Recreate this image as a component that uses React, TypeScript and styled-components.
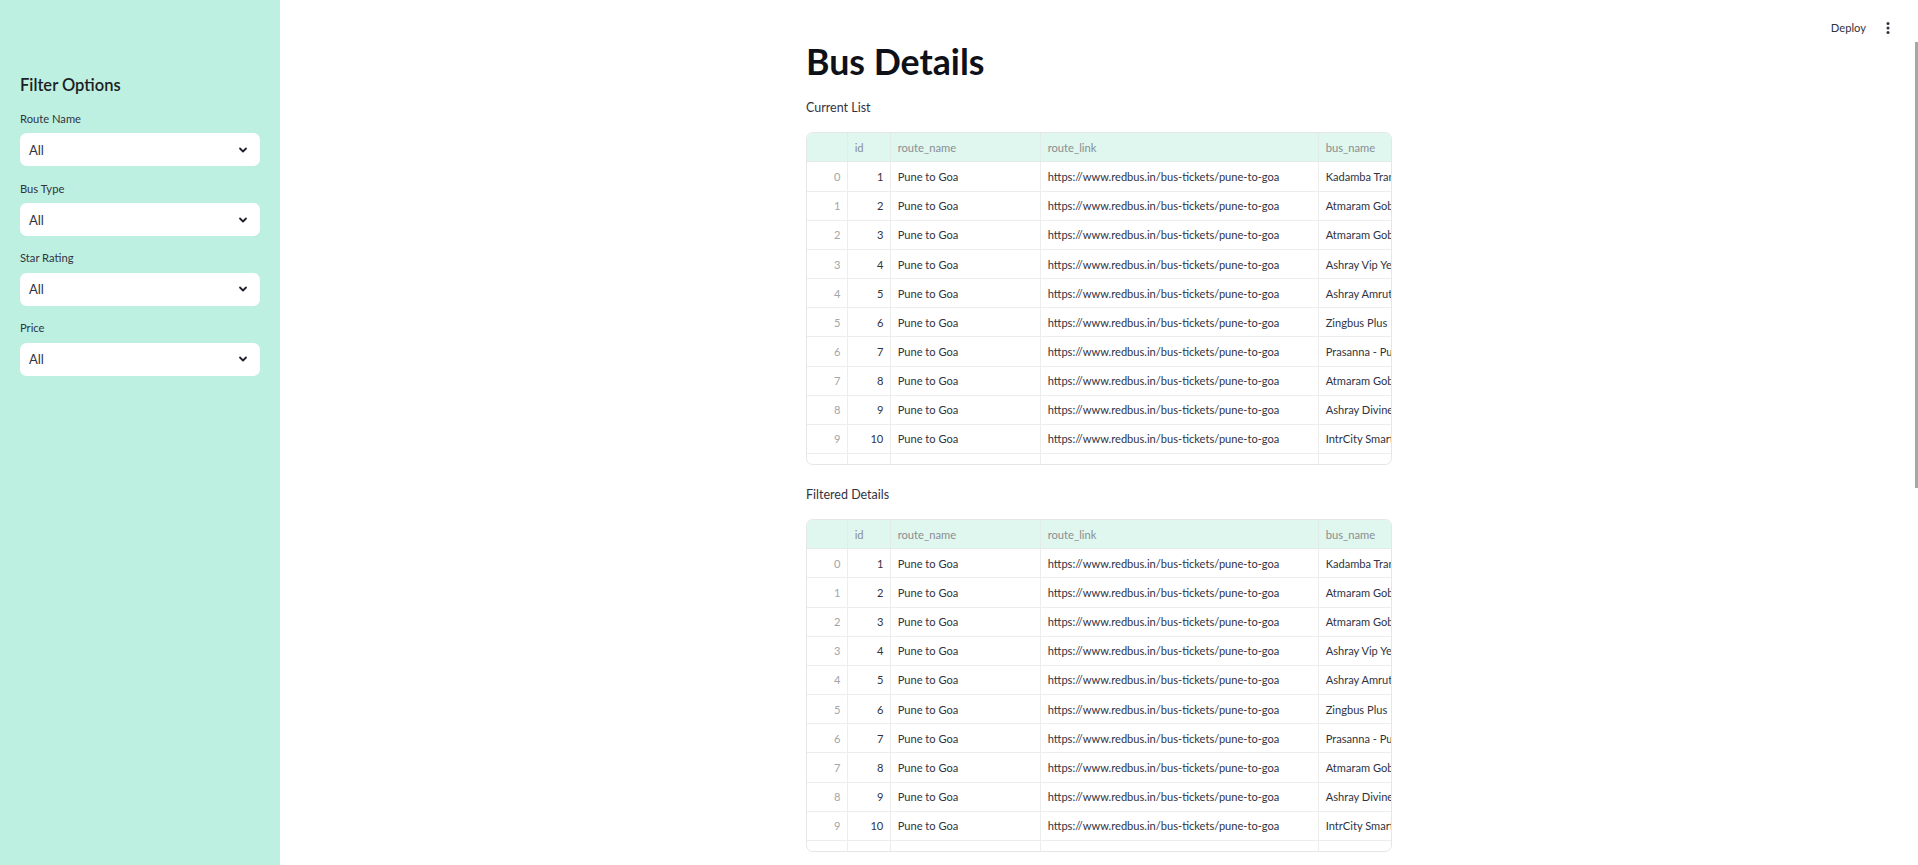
import React from 'react';
import styled, { createGlobalStyle } from 'styled-components';

const GlobalStyle = createGlobalStyle`
  html, body {
    margin: 0;
    padding: 0;
    height: 100%;
    overflow: hidden;
  }
  body {
    font-family: "Source Sans Pro", Lato, "Noto Sans", sans-serif;
    color: #31333f;
    background: #ffffff;
  }
`;

type BusRow = {
  id: number;
  routeName: string;
  routeLink: string;
  busName: string;
};

const busNames = [
  'Kadamba Transport Corporation',
  'Atmaram Gobind Travels',
  'Atmaram Gobind Travels',
  'Ashray Vip Yellow Bus',
  'Ashray Amruta Travels',
  'Zingbus Plus',
  'Prasanna - Purple Travels',
  'Atmaram Gobind Travels',
  'Ashray Divine Travels',
  'IntrCity SmartBus',
];

const rows: BusRow[] = busNames.map((busName, i) => ({
  id: i + 1,
  routeName: 'Pune to Goa',
  routeLink: 'https://www.redbus.in/bus-tickets/pune-to-goa',
  busName,
}));

const filters = ['Route Name', 'Bus Type', 'Star Rating', 'Price'];

function Chevron() {
  return (
    <svg width="10" height="10" viewBox="0 0 10 10" fill="none">
      <path d="M2 3.5 L5 6.5 L8 3.5" stroke="#1f2128" strokeWidth="1.8" strokeLinecap="round" strokeLinejoin="round" />
    </svg>
  );
}

function Kebab() {
  return (
    <svg width="4" height="14" viewBox="0 0 4 14">
      <circle cx="2" cy="2.5" r="1.5" fill="#31333f" />
      <circle cx="2" cy="7" r="1.5" fill="#31333f" />
      <circle cx="2" cy="11.5" r="1.5" fill="#31333f" />
    </svg>
  );
}

function DataTable() {
  return (
    <TableFrame>
      <Grid>
        <HeadCell />
        <HeadCell>id</HeadCell>
        <HeadCell>route_name</HeadCell>
        <HeadCell>route_link</HeadCell>
        <HeadCell>bus_name</HeadCell>
        {rows.map((row, i) => (
          <React.Fragment key={i}>
            <IndexCell>{i}</IndexCell>
            <Cell $align="right">{row.id}</Cell>
            <Cell>{row.routeName}</Cell>
            <Cell>{row.routeLink}</Cell>
            <Cell>{row.busName}</Cell>
          </React.Fragment>
        ))}
        {/* next row, cut off by the frame */}
        <Cell />
        <Cell />
        <Cell />
        <Cell />
        <Cell />
      </Grid>
    </TableFrame>
  );
}

export default function App() {
  return (
    <>
      <GlobalStyle />
      <Page>
        <Sidebar>
          <SidebarTitle>Filter Options</SidebarTitle>
          {filters.map((f) => (
            <Field key={f}>
              <Label>{f}</Label>
              <Select>
                <span>All</span>
                <Chevron />
              </Select>
            </Field>
          ))}
        </Sidebar>
        <Main>
          <Toolbar>
            <DeployButton>Deploy</DeployButton>
            <MenuButton>
              <Kebab />
            </MenuButton>
          </Toolbar>
          <Content>
            <Title>Bus Details</Title>
            <Text>Current List</Text>
            <DataTable />
            <Text $top={18.5}>Filtered Details</Text>
            <DataTable />
          </Content>
          <ScrollThumb />
        </Main>
      </Page>
    </>
  );
}

const Page = styled.div`
  display: flex;
  height: 865px;
  width: 100%;
`;

const Sidebar = styled.aside`
  width: 280px;
  flex-shrink: 0;
  background: #bef0e1;
  padding: 73px 20px 0;
  box-sizing: border-box;
  display: flex;
  flex-direction: column;
`;

const SidebarTitle = styled.h3`
  margin: 0 0 12.7px;
  font-size: 16.5px;
  font-weight: 600;
  line-height: 24px;
  color: #1c1e24;
`;

const Field = styled.div`
  display: flex;
  flex-direction: column;
  margin-bottom: 13.3px;
`;

const Label = styled.label`
  font-size: 11.2px;
  line-height: 18.7px;
  margin-bottom: 4.6px;
  color: #31333f;
`;

const Select = styled.div`
  height: 33.3px;
  background: #ffffff;
  border-radius: 6.67px;
  display: flex;
  align-items: center;
  justify-content: space-between;
  padding: 0 12px 0 9px;
  font-size: 13px;
  color: #31333f;
`;

const Main = styled.main`
  flex: 1;
  position: relative;
  display: flex;
  justify-content: center;
  overflow: hidden;
`;

const Toolbar = styled.div`
  position: absolute;
  top: 17px;
  right: 28px;
  display: flex;
  align-items: center;
  gap: 20px;
`;

const DeployButton = styled.div`
  font-size: 11.2px;
  color: #31333f;
  line-height: 22px;
`;

const MenuButton = styled.div`
  display: flex;
  align-items: center;
  height: 22px;
`;

const ScrollThumb = styled.div`
  position: absolute;
  right: 0;
  top: 42px;
  width: 3px;
  height: 446px;
  background: #a6a6a6;
`;

const Content = styled.div`
  width: 586px;
  padding-top: 40px;
  display: flex;
  flex-direction: column;
`;

const Title = styled.h1`
  margin: 0 0 13px;
  font-size: 35.7px;
  line-height: 44px;
  font-weight: 700;
  color: #0e1117;
`;

const Text = styled.p<{ $top?: number }>`
  margin: ${(p) => p.$top ?? 0}px 0 14px;
  font-size: 12.5px;
  line-height: 21.3px;
  color: #31333f;
`;

const TableFrame = styled.div`
  height: 333px;
  border: 1px solid #e4e7e6;
  border-radius: 6.67px;
  overflow: hidden;
  box-sizing: border-box;
`;

const Grid = styled.div`
  display: grid;
  grid-template-columns: 41px 43px 150px 278px 160px;
  grid-auto-rows: 29.17px;
`;

const HeadCell = styled.div`
  background: #dff7ee;
  color: #8b8e93;
  font-size: 11.2px;
  display: flex;
  align-items: center;
  padding: 0 6.7px;
  border-right: 1px solid #e2ebe7;
  border-bottom: 1px solid #e2ebe7;
  box-sizing: border-box;
  white-space: nowrap;
  overflow: hidden;
`;

const Cell = styled.div<{ $align?: 'right' }>`
  font-size: 11.1px;
  color: #31333f;
  display: flex;
  align-items: center;
  justify-content: ${(p) => (p.$align === 'right' ? 'flex-end' : 'flex-start')};
  padding: 0 6.7px;
  border-right: 1px solid #eceeee;
  border-bottom: 1px solid #eceeee;
  box-sizing: border-box;
  white-space: nowrap;
  overflow: hidden;
`;

const IndexCell = styled(Cell)`
  justify-content: flex-end;
  color: #a3a5a9;
`;
